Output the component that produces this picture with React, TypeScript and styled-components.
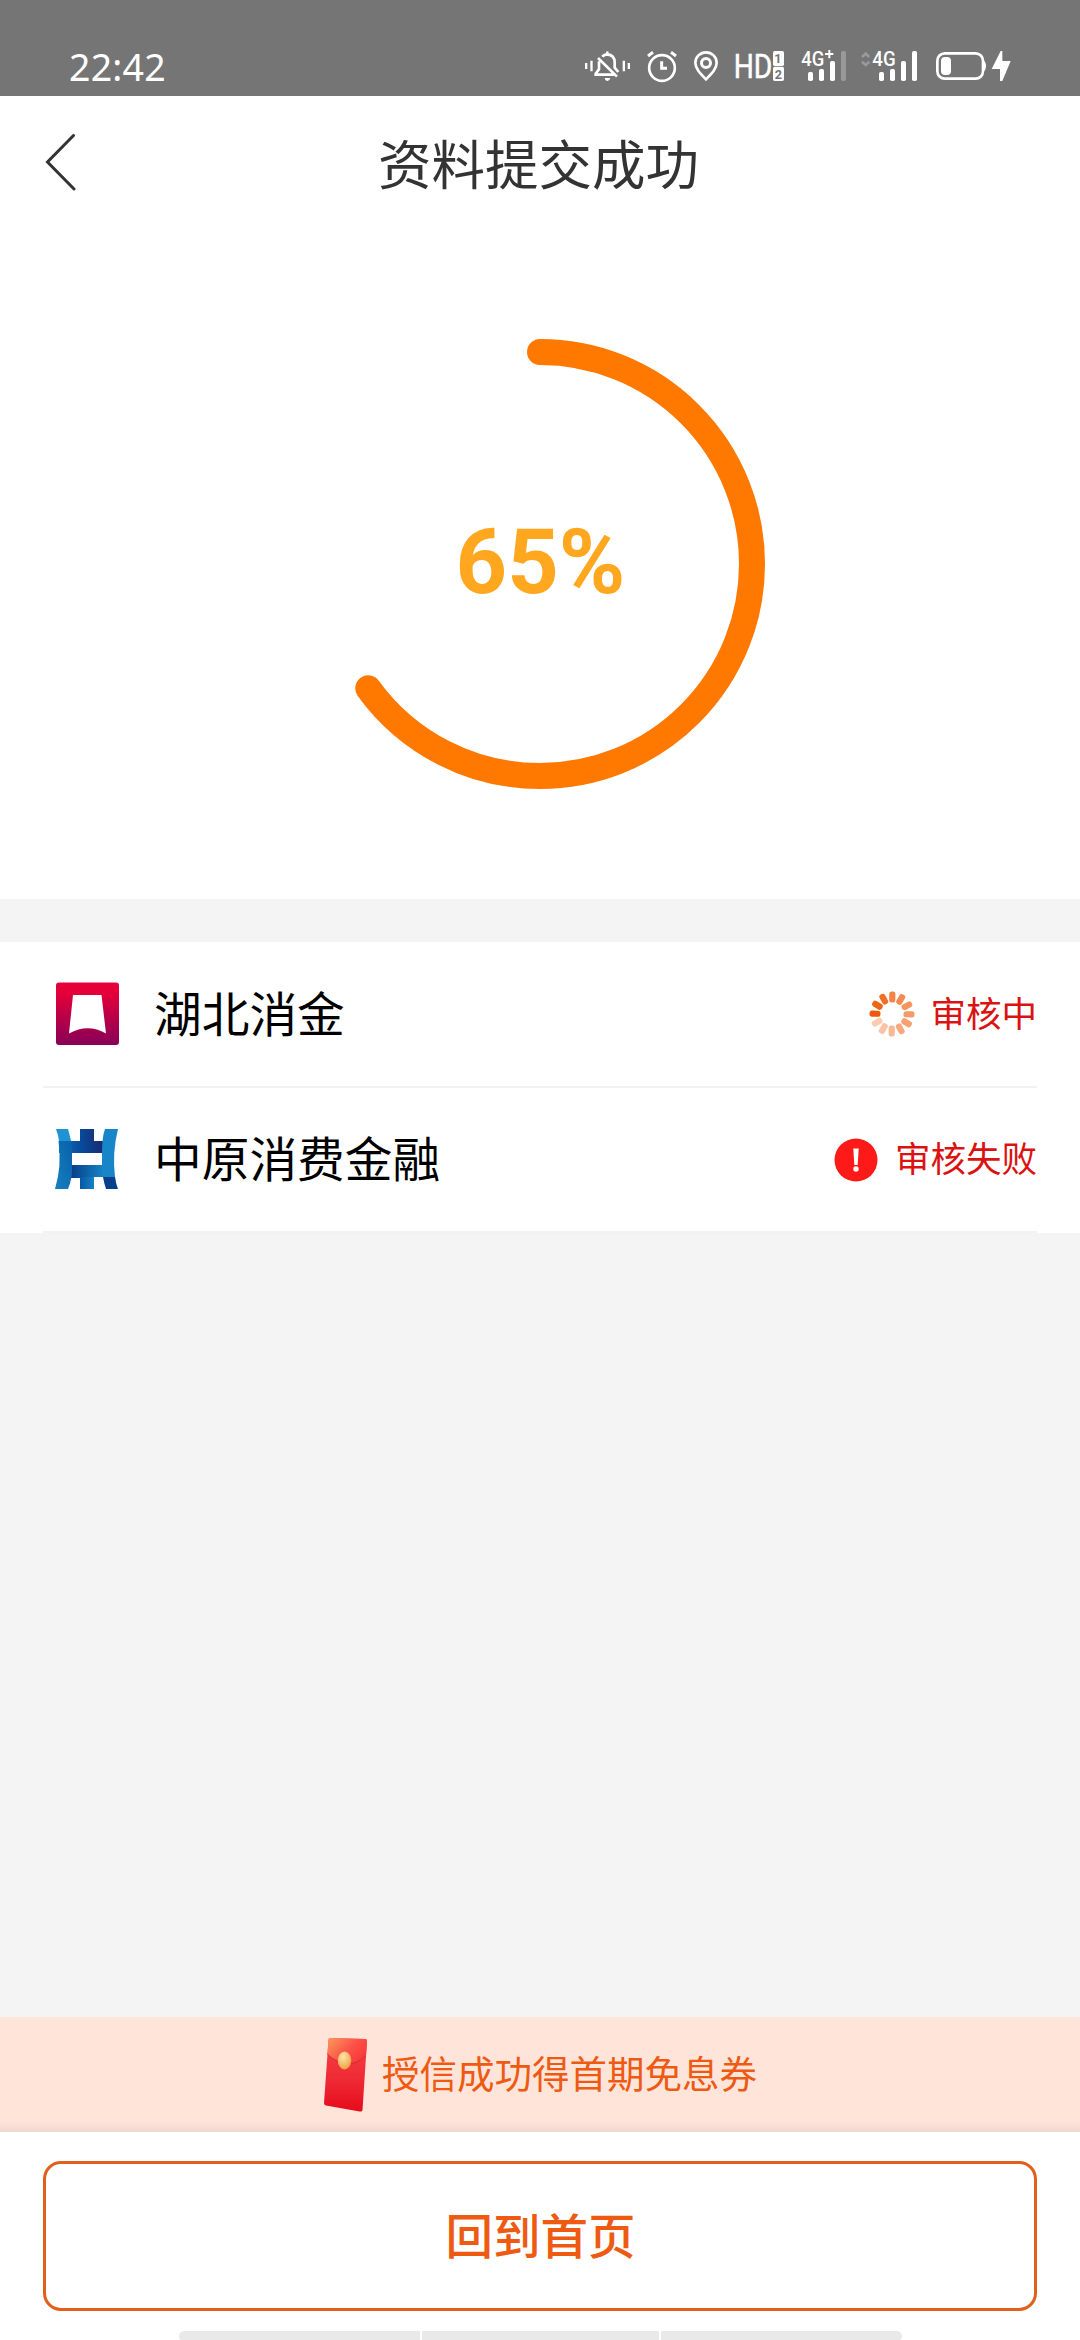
import React from 'react';
import styled, { createGlobalStyle } from 'styled-components';

const GlobalStyle = createGlobalStyle`
  * { box-sizing: border-box; }
  body {
    margin: 0;
    background: #f4f4f4;
    font-family: 'Noto Sans CJK SC', 'Noto Sans', sans-serif;
  }
`;

const Screen = styled.div`
  display: flex;
  flex-direction: column;
  width: 1080px;
  height: 2340px;
  overflow: hidden;
  background: #f4f4f4;
`;

const StatusBar = styled.header`
  display: flex;
  justify-content: space-between;
  height: 96px;
  padding: 0 69px;
  background: #757575;
  color: #fff;
`;

const Clock = styled.time`
  padding-top: 41px;
  font: 400 37.5px/52px 'Noto Sans', sans-serif;
  letter-spacing: 0.2px;
`;

const StatusIcons = styled.div`
  display: flex;
  padding-top: 50px;
`;

const Glyph = styled.svg<{ $w: number; $gap?: number }>`
  display: block;
  width: ${(p) => p.$w}px;
  height: 32px;
  margin-left: ${(p) => p.$gap ?? 0}px;
  overflow: visible;
  fill: none;
  stroke: none;
`;

const TitleBar = styled.nav`
  display: grid;
  grid-template-columns: 120px 1fr 120px;
  align-items: center;
  height: 136px;
  background: #fff;
`;

const BackButton = styled.button`
  display: block;
  width: 32px;
  height: 58px;
  margin: 0 0 4px 45px;
  padding: 0;
  border: 0;
  background: none;
`;

const Title = styled.h1`
  margin: 0 0 5px -3px;
  color: #333;
  font-size: 53.5px;
  font-weight: 400;
  line-height: 80px;
  text-align: center;
`;

const ProgressPanel = styled.section`
  display: grid;
  justify-content: center;
  height: 667px;
  padding-top: 107px;
  background: #fff;
`;

const Ring = styled.svg`
  grid-area: 1 / 1;
  width: 450px;
  height: 450px;
`;

const Percent = styled.strong`
  grid-area: 1 / 1;
  height: 450px;
  padding-left: 1px;
  color: #ffa81f;
  font: 700 90px/447px Roboto, sans-serif;
  text-align: center;
`;

const List = styled.ul`
  margin: 43px 0 0;
  padding: 0 43px;
  list-style: none;
  background: #fff;
`;

const Row = styled.li<{ $h: number }>`
  display: flex;
  align-items: center;
  height: ${(p) => p.$h}px;
  padding-left: 12px;
  border-bottom: 2px solid #f2f2f2;
`;

const Logo = styled.svg`
  width: 64px;
  height: 64px;
`;

const Name = styled.span`
  flex: 1;
  padding: 0 0 5px 35px;
  color: #000;
  font-size: 47.7px;
  line-height: 72px;
`;

const State = styled.span`
  display: flex;
  align-items: center;
  gap: 15.5px;
`;

const StateText = styled.span`
  padding-bottom: 5px;
  color: #db1212;
  font-size: 35.5px;
  line-height: 52px;
`;

const StateIcon = styled.svg`
  width: 46px;
  height: 46px;
`;

const Banner = styled.div`
  display: flex;
  justify-content: center;
  align-items: center;
  height: 115px;
  margin-top: auto;
  padding-right: 1px;
  gap: 14px;
  background: linear-gradient(#ffe4da 0 104px, #efd8ce 115px);
`;

const BannerText = styled.span`
  padding-bottom: 5px;
  color: #ee5a12;
  font-size: 37.5px;
  line-height: 56px;
`;

const Envelope = styled.svg`
  width: 46px;
  height: 78px;
`;

const Footer = styled.footer`
  display: flex;
  flex-direction: column;
  align-items: center;
  justify-content: space-between;
  height: 208px;
  padding-top: 29px;
  background: #fff;
`;

const HomeButton = styled.button`
  width: 994px;
  height: 150px;
  padding: 0 0 5px 1px;
  border: 3px solid #e0601c;
  border-radius: 18px;
  background: #fff;
  color: #ee5a12;
  font: 500 47.5px/72px 'Noto Sans CJK SC', sans-serif;
`;

const GestureBar = styled.div`
  display: grid;
  grid-template-columns: 241px 237px 241px;
  gap: 2px;
  height: 9px;
  overflow: hidden;
  border-radius: 6px 6px 4px 4px;
`;

const GestureSegment = styled.span`
  background: #e9e9e9;
`;

const MutedBell = () => (
  <Glyph $w={47} viewBox="42 60 141 96">
    <g stroke="#fff" strokeWidth="7">
      <path d="M48.500 99v18M64.500 92v32M161.500 92v32M176.500 99v18" />
      <path d="M97 80q5-7 15-7q22 2 22 24v16l11 13M87 94v24l-10 13v3h58M84 84l57 56" strokeWidth="8" />
      <path d="M112 64v9" />
    </g>
    <path d="M104 144h17q-2 9-8.500 9t-8.500-9Z" fill="#fff" />
  </Glyph>
);

const Alarm = () => (
  <Glyph $w={30} $gap={16} viewBox="231 60 90 96">
    <g stroke="#fff" strokeWidth="8">
      <circle cx="276" cy="114" r="38.500" />
      <path d="M275 94v21h16" strokeWidth="9" />
      <path d="M234 78l15-11M318 78l-15-11" strokeWidth="9" />
    </g>
  </Glyph>
);

const Pin = () => (
  <Glyph $w={26} $gap={16} viewBox="369 60 78 96">
    <g stroke="#fff" strokeWidth="8">
      <path d="M408 148C390 130 376 116 376 98a32 31 0 0 1 64 0c0 18-14 32-32 50Z" />
      <circle cx="408" cy="99" r="13.500" strokeWidth="9" />
    </g>
  </Glyph>
);

const HdVoice = () => (
  <Glyph $w={50} $gap={16} viewBox="495 60 150 96">
    <text x="491" y="143" fill="#fff" stroke="#fff" strokeWidth="1.500" fontFamily="Roboto, sans-serif" fontSize="98" textLength="116" lengthAdjust="spacingAndGlyphs">HD</text>
    <rect x="609" y="63" width="33" height="45" rx="5" fill="#fff" />
    <rect x="609" y="110" width="33" height="43" rx="5" fill="#fff" />
    <g fill="#757575" fontFamily="Roboto, sans-serif" fontWeight="700" fontSize="38" textAnchor="middle">
      <text x="624" y="99">1</text>
      <text x="625.500" y="146">2</text>
    </g>
  </Glyph>
);

const bars = [
  [0, 126],
  [33, 117],
  [66, 93],
  [99, 63],
];

const SignalBars = ({ x, weak }: { x: number; weak?: boolean }) => (
  <>
    {bars.map(([dx, y], i) => (
      <rect key={dx} x={x + dx} y={y} width="15" height={153 - y} rx="5" fill={weak && i === 3 ? '#999' : '#fff'} />
    ))}
  </>
);

const SignalOne = () => (
  <Glyph $w={46} $gap={16} viewBox="63 60 138 96">
    <text x="64" y="108" fill="#fff" fontFamily="Roboto, sans-serif" fontWeight="500" fontSize="59" textLength="69" lengthAdjust="spacingAndGlyphs">4G</text>
    <path d="M148 60v25M135 72h25" stroke="#fff" strokeWidth="6" />
    <SignalBars x={84} weak />
  </Glyph>
);

const SignalTwo = () => (
  <Glyph $w={57} $gap={14} viewBox="243 60 171 96">
    <path d="M246 81l11-10 11 10M246 95l11 10 11-10" stroke="#999" strokeWidth="8" />
    <text x="277" y="108" fill="#fff" fontFamily="Roboto, sans-serif" fontWeight="500" fontSize="59" textLength="70" lengthAdjust="spacingAndGlyphs">4G</text>
    <SignalBars x={297} />
  </Glyph>
);

const Battery = () => (
  <Glyph $w={52} $gap={17} viewBox="465 60 156 96">
    <rect x="472" y="70" width="137" height="76" rx="22" stroke="#fff" strokeWidth="8" />
    <rect x="483" y="81" width="30" height="54" rx="12" fill="#fff" />
    <path d="M611 92q7 4 7 16t-7 16Z" fill="#fff" />
  </Glyph>
);

const Bolt = () => (
  <Glyph $w={20} $gap={4} viewBox="633 60 60 96">
    <path d="M662 63l-27 54h25v36h7l25-60h-25V63Z" fill="#fff" />
  </Glyph>
);

const HubeiLogo = () => (
  <Logo viewBox="0 0 64 64">
    <defs>
      <linearGradient id="hubei" x1="0" y1="0" x2="0" y2="1">
        <stop offset="0.150" stopColor="#e60039" />
        <stop offset="1" stopColor="#870058" />
      </linearGradient>
    </defs>
    <rect x="1" y="0.500" width="63" height="62.500" rx="3" fill="url(#hubei)" />
    <path d="M18 13h28.500L51 51.500Q33 41 14 51.500Z" fill="#fff" />
  </Logo>
);

const ZhongyuanLogo = () => (
  <Logo viewBox="0 0 64 64">
    <defs>
      <linearGradient id="zyTop">
        <stop offset="0" stopColor="#116fb5" />
        <stop offset="0.550" stopColor="#07489a" />
        <stop offset="1" stopColor="#1b2a72" />
      </linearGradient>
      <linearGradient id="zyBottom">
        <stop offset="0" stopColor="#063e87" />
        <stop offset="1" stopColor="#1686c8" />
      </linearGradient>
      <linearGradient id="zyLeft" x1="0" y1="1" x2="1" y2="0">
        <stop offset="0" stopColor="#1680c2" />
        <stop offset="1" stopColor="#0861a8" />
      </linearGradient>
      <linearGradient id="zyStem">
        <stop offset="0" stopColor="#064c9b" />
        <stop offset="1" stopColor="#17347d" />
      </linearGradient>
      <linearGradient id="zyFoot">
        <stop offset="0" stopColor="#0758a5" />
        <stop offset="1" stopColor="#1682c5" />
      </linearGradient>
    </defs>
    <path d="M25 1h14v12h9v12H4V13h21Z" fill="url(#zyTop)" />
    <path d="M25 1h14v13H25Z" fill="url(#zyStem)" />
    <path d="M1 1h12q2 7 3 12H4Q3 6 1 1Z" fill="#2093d5" />
    <path d="M3.500 13H17v26q0 13-4 22H0Q7 38 3.500 13Z" fill="url(#zyLeft)" />
    <path d="M17 37h32v12H39v12H25V50h-9Z" fill="url(#zyBottom)" />
    <path d="M25 49h14v12H25Z" fill="url(#zyFoot)" />
    <path d="M50 1h13q-6 24-3 48H47V25Q47 9 50 1Z" fill="#1785c8" />
    <path d="M48 49h12q1 7 3 12H51q-2-6-3-12Z" fill="#063f8c" />
  </Logo>
);

const petals = ['#f58446', '#f48a50', '#f59660', '#f59b68', '#f6a170', '#f7a97e', '#f9b792', '#fbc3a6', '#fccbb0', '#ee5a0a', '#ef6516', '#f07026'];

const Spinner = () => (
  <StateIcon viewBox="-23 -23 46 46">
    {petals.map((color, i) => (
      <rect key={i} x="-3.100" y="-22.500" width="6.200" height="11" rx="2.600" fill={color} transform={`rotate(${(i * 30 + 1) % 360})`} />
    ))}
  </StateIcon>
);

const Failed = () => (
  <StateIcon viewBox="-23 -23 46 46">
    <circle r="21.500" fill="#ff1a1a" />
    <path d="M-2.700-11.500h5.400L1.700 5h-3.400Z" fill="#fff" />
    <circle cy="9" r="2.700" fill="#fff" />
  </StateIcon>
);

const RedEnvelope = () => (
  <Envelope viewBox="0 0 46 78">
    <defs>
      <linearGradient id="envBody" x1="0" y1="0" x2="0" y2="1">
        <stop offset="0.200" stopColor="#f43a40" />
        <stop offset="0.600" stopColor="#ee2833" />
        <stop offset="1" stopColor="#e50c19" />
      </linearGradient>
      <linearGradient id="envFlap" x1="0" y1="0" x2="1" y2="0.600">
        <stop offset="0" stopColor="#fb9a5c" />
        <stop offset="0.600" stopColor="#fb5348" />
        <stop offset="1" stopColor="#f8383b" />
      </linearGradient>
      <radialGradient id="envSeal" cx="0.400" cy="0.300" r="0.700">
        <stop offset="0" stopColor="#ffe6a6" />
        <stop offset="1" stopColor="#eda347" />
      </radialGradient>
    </defs>
    <path d="M8 2l35 1q2 0 2 2l-4.500 69q0 2-3 1.500L4 69.500q-2-.5-2-2.500L6.500 4q0-2 1.500-2Z" fill="url(#envBody)" />
    <path d="M8 2l35 1q2 0 2 2l-1 15q-16 11-27 5Q10 23 5.300 18L6.500 4q0-2 1.500-2Z" fill="url(#envFlap)" />
    <path d="M5.300 18Q25 37 44 20" fill="none" stroke="#d92832" strokeWidth="0.900" />
    <ellipse cx="22.500" cy="24.500" rx="6.700" ry="9" fill="url(#envSeal)" />
  </Envelope>
);

const RADIUS = 212;
const CIRCUMFERENCE = 2 * Math.PI * RADIUS;

const ProgressRing = ({ value }: { value: number }) => (
  <Ring viewBox="0 0 450 450">
    <circle
      cx="225"
      cy="225"
      r={RADIUS}
      fill="none"
      stroke="#ff7800"
      strokeWidth="26"
      strokeLinecap="round"
      strokeDasharray={`${(CIRCUMFERENCE * value) / 100} ${CIRCUMFERENCE}`}
      transform="rotate(-90 225 225)"
    />
  </Ring>
);

export default function App() {
  const progress = 65;
  return (
    <Screen>
      <GlobalStyle />
      <StatusBar>
        <Clock>22:42</Clock>
        <StatusIcons>
          <MutedBell />
          <Alarm />
          <Pin />
          <HdVoice />
          <SignalOne />
          <SignalTwo />
          <Battery />
          <Bolt />
        </StatusIcons>
      </StatusBar>
      <TitleBar>
        <BackButton aria-label="返回">
          <svg width="32" height="58" viewBox="0 0 32 58" fill="none" stroke="#333" strokeWidth="3" strokeLinecap="round">
            <path d="M28.500 2.500 2.500 29l26.500 27" />
          </svg>
        </BackButton>
        <Title>资料提交成功</Title>
      </TitleBar>
      <ProgressPanel>
        <ProgressRing value={progress} />
        <Percent>{progress}%</Percent>
      </ProgressPanel>
      <List>
        <Row $h={146}>
          <HubeiLogo />
          <Name>湖北消金</Name>
          <State>
            <Spinner />
            <StateText>审核中</StateText>
          </State>
        </Row>
        <Row $h={145}>
          <ZhongyuanLogo />
          <Name>中原消费金融</Name>
          <State>
            <Failed />
            <StateText>审核失败</StateText>
          </State>
        </Row>
      </List>
      <Banner>
        <RedEnvelope />
        <BannerText>授信成功得首期免息券</BannerText>
      </Banner>
      <Footer>
        <HomeButton>回到首页</HomeButton>
        <GestureBar>
          <GestureSegment />
          <GestureSegment />
          <GestureSegment />
        </GestureBar>
      </Footer>
    </Screen>
  );
}
